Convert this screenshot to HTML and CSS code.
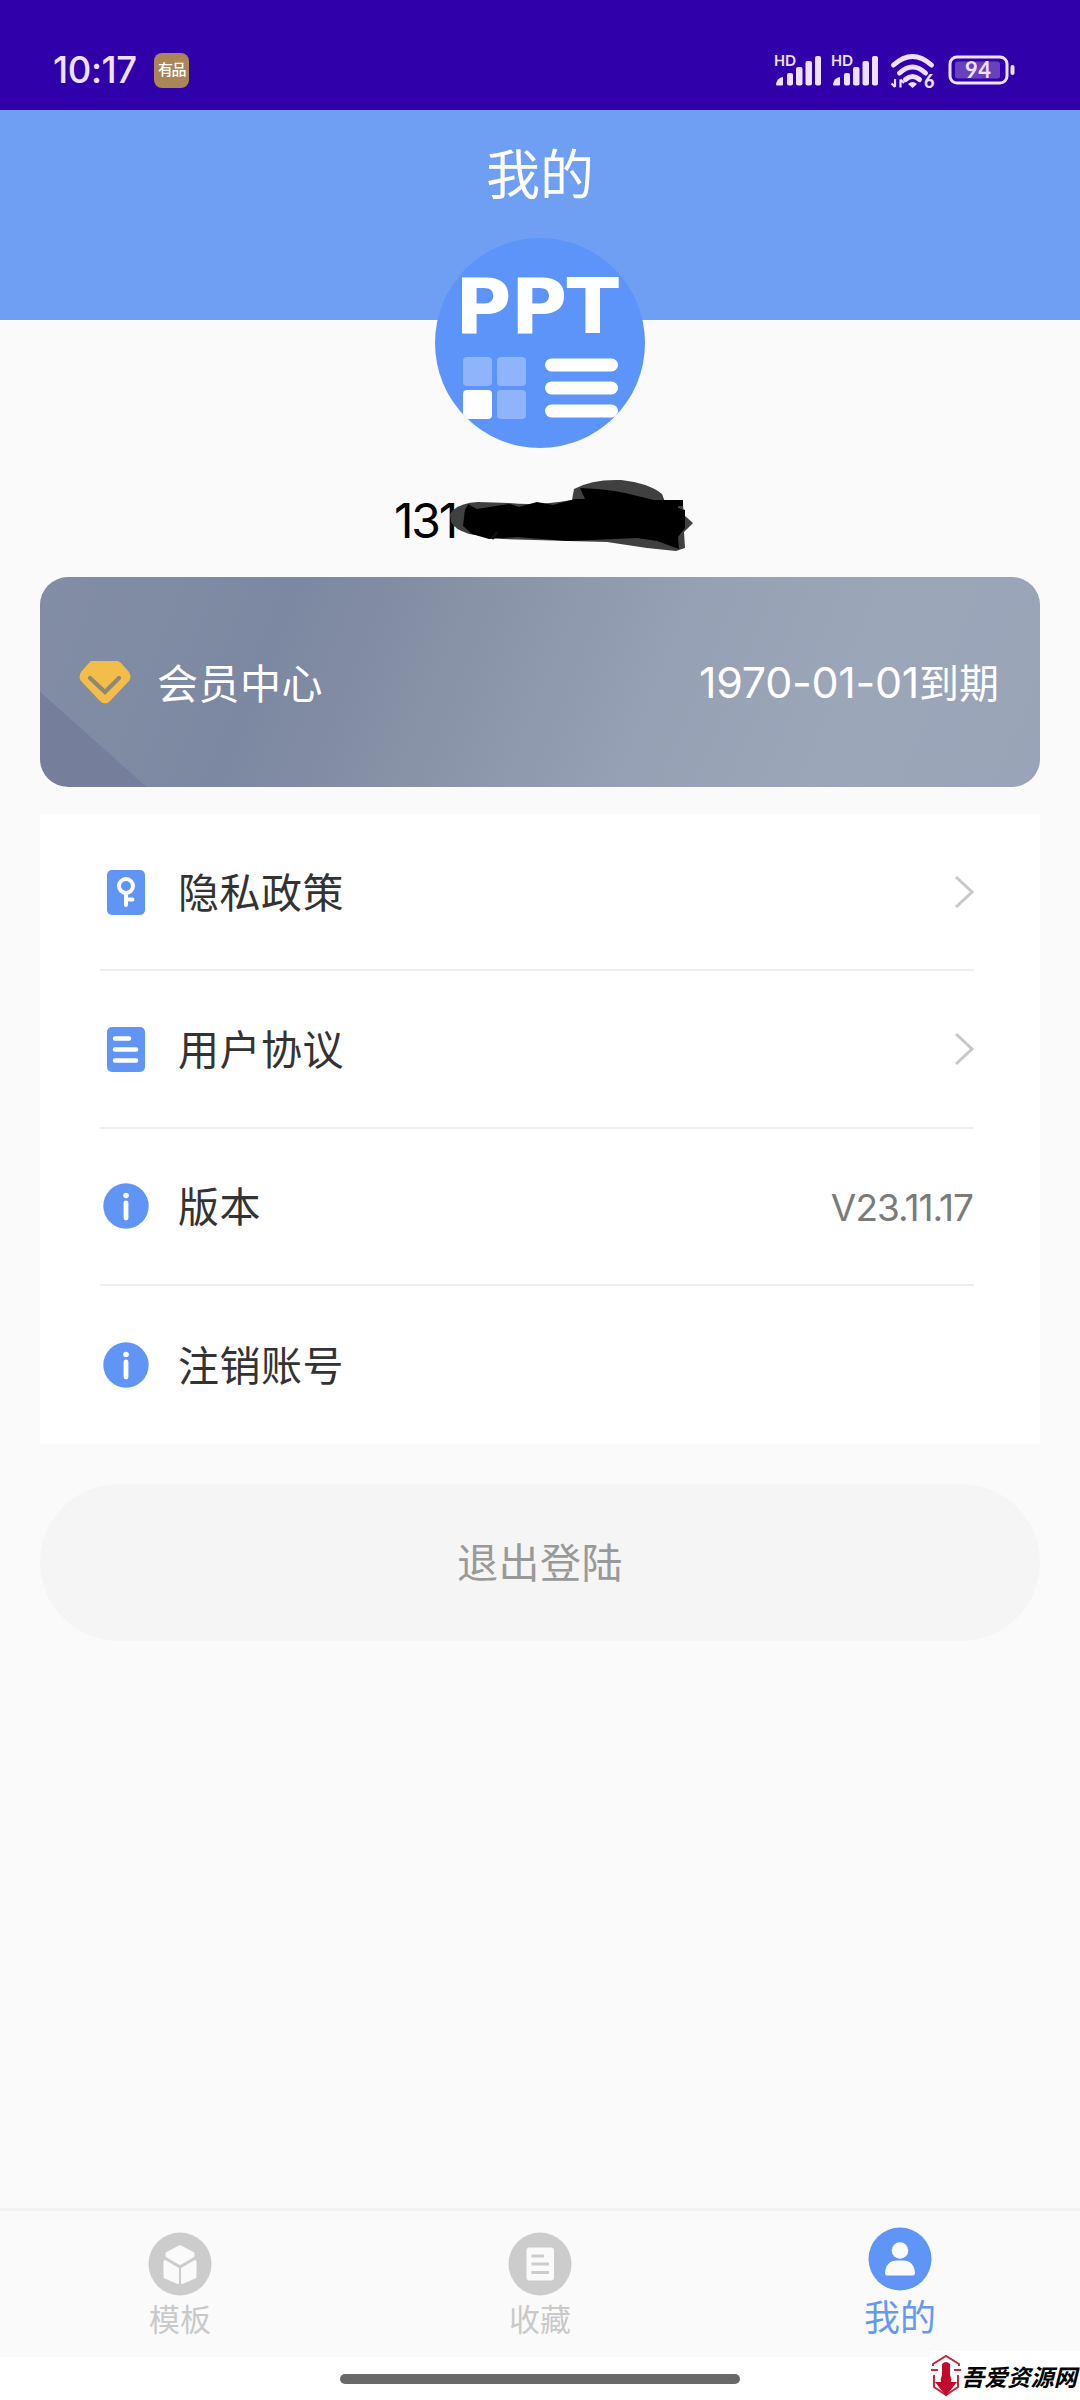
FILE: index.html
```html
<!DOCTYPE html>
<html lang="zh-CN">
<head>
<meta charset="utf-8">
<title>我的</title>
<link rel="stylesheet" href="styles.css">
</head>
<body>
<div class="screen">
  <header class="status">
    <span class="clock">10:17</span>
    <span class="app-badge">有品</span>
    <svg class="status-icons" width="246" height="44" viewBox="0 0 246 44" fill="#f0e0ff">
      <g id="signal">
        <text class="hd" x="0" y="18" textLength="22" lengthAdjust="spacingAndGlyphs">HD</text>
        <path d="M2 36q1-6 7-7v7q0 1.500-1 1.500H3q-1 0-1-1.500z"/>
        <rect x="13" y="25" width="6" height="12.500" rx="2"/>
        <rect x="22" y="19" width="6.500" height="18.500" rx="2"/>
        <rect x="31.500" y="13" width="6.500" height="24.500" rx="2"/>
        <rect x="41" y="8" width="6" height="29.500" rx="2"/>
      </g>
      <use href="#signal" x="57"/>
      <g fill="none" stroke="#f0e0ff" stroke-width="5" stroke-linecap="round">
        <path d="M119.500 17q19-17 38 0"/>
        <path d="M125.500 25q13-12 26 0"/>
        <path d="M131.500 31.500q7-6 14 0"/>
      </g>
      <path d="M134 36q4.500-4 9 0l-4.500 4z"/>
      <path d="M121 31v8m0 0l-3.500-3.500M126.500 39.500v-8m0 0l3.500 3.500" stroke="#f0e0ff" stroke-width="2.200" fill="none"/>
      <text class="six" x="150" y="40">6</text>
      <rect x="176" y="9" width="57" height="26" rx="7" fill="none" stroke="#f0e0ff" stroke-width="3"/>
      <rect x="181" y="13.500" width="45" height="17" rx="2.500" fill="#6940bd"/>
      <rect x="236.500" y="17" width="4" height="10" rx="2"/>
      <text class="battery" x="191" y="30" textLength="26">94</text>
    </svg>
  </header>

  <section class="hero">
    <h1 class="title">我的</h1>
    <svg class="avatar" viewBox="0 0 210 210">
      <defs><clipPath id="round"><circle cx="105" cy="105" r="105"/></clipPath></defs>
      <g clip-path="url(#round)" fill="#fff">
        <rect width="210" height="210" fill="#5c94f9"/>
        <text class="ppt" x="20" y="95" textLength="164">PPT</text>
        <rect x="28" y="119" width="29" height="29" rx="4" fill="#8fb4fb"/>
        <rect x="62" y="119" width="29" height="29" rx="4" fill="#8fb4fb"/>
        <rect x="28" y="152" width="29" height="29" rx="4"/>
        <rect x="62" y="152" width="29" height="29" rx="4" fill="#8fb4fb"/>
        <rect x="110" y="120.500" width="73" height="13" rx="6.500"/>
        <rect x="110" y="143.500" width="73" height="13" rx="6.500"/>
        <rect x="110" y="166.500" width="73" height="13" rx="6.500"/>
      </g>
    </svg>
  </section>

  <div class="account">
    <span class="phone">131</span>
    <svg class="scribble" width="246" height="76" viewBox="0 0 246 76">
      <path fill="#404040" d="M3 35Q10 24 31 23L62 24Q90 27 125 21L127 10Q145 0 174 1Q202 4 215 15L218 23L236 26L237 36L246 44L237 53L238 69L229 72L200 69L160 63L121 62L55 60L22 55Q7 50 4 43Z"/>
      <path fill="#000" d="M133 9Q160 10 178 14L207 21H236V27H231V29L238 31V49L231 58L232 70L210 62L190 59L121 62L70 58L42 60L25 55L16 47L18 31L21 25L30 30L55 26L63 25L72 28L90 23L106 26L128 20H138Z"/>
      <path d="M50 53l-5 7" stroke="#111" stroke-width="3"/>
    </svg>
  </div>

  <section class="member">
    <svg class="gem" width="52" height="44" viewBox="0 0 52 44">
      <path d="M13 1H38Q40 1 42 3L50 12Q53 17 50 21L31 41Q26 46 21 41L2 21Q-1 17 2 12L10 3Q11 1 13 1Z" fill="#f3bd49"/>
      <path d="M11 18L26 32L40 18" fill="none" stroke="#8d8873" stroke-width="4.200" stroke-linecap="round"/>
    </svg>
    <span class="member-name">会员中心</span>
    <span class="expiry"><span class="date">1970-01-01</span>到期</span>
  </section>

  <ul class="menu">
    <li class="row">
      <svg class="row-icon" viewBox="0 0 46 46"><rect x="4" y="1" width="38" height="45" rx="5" fill="#6195f5"/><g fill="none" stroke="#fff" stroke-linecap="round"><circle cx="23" cy="17" r="7" stroke-width="4"/><path d="M23 25V36M24 30.500H29.500" stroke-width="4"/></g></svg>
      <span class="label">隐私政策</span>
      <svg class="chevron" viewBox="0 0 20 34"><path d="M2 2L18 17L2 32" fill="none" stroke="#c8c8c8" stroke-width="3"/></svg>
    </li>
    <li class="row">
      <svg class="row-icon" viewBox="0 0 46 46"><rect x="4" y="1" width="38" height="45" rx="5" fill="#6195f5"/><path d="M12 12.500H26M12 23.500H33M12 34.500H33" stroke="#fff" stroke-width="4.500" stroke-linecap="round"/></svg>
      <span class="label">用户协议</span>
      <svg class="chevron" viewBox="0 0 20 34"><path d="M2 2L18 17L2 32" fill="none" stroke="#c8c8c8" stroke-width="3"/></svg>
    </li>
    <li class="row">
      <svg class="row-icon" viewBox="0 0 46 46"><circle cx="23" cy="23" r="22.700" fill="#6195f5"/><circle cx="23" cy="12.500" r="2.800" fill="#fff"/><path d="M23 20V35" stroke="#fff" stroke-width="4.800" stroke-linecap="round"/></svg>
      <span class="label">版本</span>
      <span class="version">V23.11.17</span>
    </li>
    <li class="row">
      <svg class="row-icon" viewBox="0 0 46 46"><circle cx="23" cy="23" r="22.700" fill="#6195f5"/><circle cx="23" cy="12.500" r="2.800" fill="#fff"/><path d="M23 20V35" stroke="#fff" stroke-width="4.800" stroke-linecap="round"/></svg>
      <span class="label">注销账号</span>
    </li>
  </ul>

  <button class="logout">退出登陆</button>

  <nav class="tabs">
    <a class="tab">
      <svg class="tab-icon" viewBox="0 0 64 64"><circle cx="32" cy="32" r="31.500" fill="#ccc"/><g fill="#fafafa" stroke="#fafafa" stroke-width="3" stroke-linejoin="round"><path d="M32 14.500L45 21.500V24L32 31.500L19 24V21.500Z"/><path d="M17 29.500L29.500 37V50.500L17 45Z"/><path d="M47 29.500L34.500 37V50.500L47 45Z"/></g></svg>
      <span>模板</span>
    </a>
    <a class="tab">
      <svg class="tab-icon" viewBox="0 0 64 64"><circle cx="32" cy="32" r="31.500" fill="#ccc"/><rect x="18.500" y="15.500" width="27.500" height="33" rx="3" fill="#fafafa"/><path d="M23.500 24H36M23.500 32H41M23.500 40.500H41" stroke="#ccc" stroke-width="3.200"/></svg>
      <span>收藏</span>
    </a>
    <a class="tab active">
      <svg class="tab-icon" viewBox="0 0 64 64"><circle cx="32" cy="32" r="31.500" fill="#5f95f6"/><circle cx="32" cy="23.500" r="8.300" fill="#fafafa"/><path d="M17 46Q18 33.500 29 33.500H35Q46 33.500 47 46Q47 48.500 45 48.500H19Q17 48.500 17 46Z" fill="#fafafa"/></svg>
      <span>我的</span>
    </a>
  </nav>

  <footer class="gesture">
    <div class="home-bar"></div>
    <div class="watermark">
      <svg width="30" height="44" viewBox="0 0 30 44">
        <path d="M2 12V10L15 2L28 10V12M0 16H7M23 16H30M3 21V33L15 41L27 33V21" fill="none" stroke="#c5283f" stroke-width="2"/>
        <path d="M11 10Q15 6 19 10V21Q21 25 20 28H26L15 42L4 28H10Q9 25 11 21Z" fill="#c4092c"/>
      </svg>
      <span>吾爱资源网</span>
    </div>
  </footer>
</div>
</body>
</html>
```
FILE: styles.css
```css
* { box-sizing: border-box; }
body {
  margin: 0;
  font-family: Lato, "Noto Sans CJK SC", sans-serif;
  background: #fafafa;
}
.screen {
  width: 1080px;
  height: 2400px;
  display: flex;
  flex-direction: column;
  overflow: hidden;
}
.status {
  height: 110px;
  flex: none;
  padding: 30px 60px 0 53px;
  display: flex;
  align-items: center;
  background: #3000aa;
  color: #f0e0ff;
}
.clock {
  width: 101px;
  font-family: Inter, sans-serif;
  font-size: 36.500px;
  font-weight: 500;
  line-height: 44px;
  letter-spacing: -0.400px;
}
.app-badge {
  width: 35px;
  height: 35px;
  border-radius: 8px;
  background: #aa8558;
  color: #fff;
  font-size: 15px;
  font-weight: 500;
  line-height: 33px;
  text-align: center;
  letter-spacing: -1.500px;
}
.status-icons { margin-left: auto; overflow: visible; }
.hd { font-size: 15px; font-weight: 700; }
.six { font-size: 18px; font-weight: 900; }
.battery { font-size: 22px; font-weight: 700; }
.hero {
  height: 210px;
  flex: none;
  display: flex;
  flex-direction: column;
  align-items: center;
  background: #6e9ff3;
}
.title {
  margin: 25px 0 0;
  height: 80px;
  color: #fff;
  font-size: 54px;
  font-weight: 400;
  line-height: 80px;
}
.avatar {
  width: 210px;
  height: 210px;
  flex: none;
  margin-top: 23px;
}
.ppt { font-family: "DejaVu Sans", sans-serif; font-size: 77px; font-weight: 700; }
.account {
  height: 129px;
  flex: none;
  margin: 128px 0 0 394px;
  display: flex;
  align-items: flex-start;
}
.phone {
  width: 53px;
  margin-top: 43px;
  font-family: Inter, sans-serif;
  font-size: 48px;
  line-height: 60px;
  letter-spacing: -2.200px;
  color: #000;
}
.scribble { margin-top: 31px; flex: none; }
.member {
  height: 210px;
  flex: none;
  margin: 0 40px;
  padding: 0 41px 0 39px;
  border-radius: 28px;
  display: flex;
  align-items: center;
  color: #fff;
  font-size: 41px;
  background:
    linear-gradient(to top right, #757f9c 50%, transparent 50.500%) left bottom / 106px 95px no-repeat,
    linear-gradient(112deg, #838ea6 0%, #7c87a1 24%, #8994a8 43%, #96a1b5 62%, #9ca6b9 80%, #99a4b8 100%);
}
.member-name { margin-left: 26px; padding-bottom: 3px; letter-spacing: 0.500px; }
.expiry { margin-left: auto; padding-bottom: 2px; font-size: 40px; }
.date { font-family: Inter, sans-serif; font-size: 43px; letter-spacing: -0.300px; }
.menu {
  height: 630px;
  flex: none;
  margin: 27px 40px 0;
  padding: 0 66px 0 60px;
  list-style: none;
  background: #fff;
}
.row {
  height: 157.300px;
  padding-left: 3px;
  display: flex;
  align-items: center;
  border-bottom: 2px solid #eee;
  color: #333;
  font-size: 41px;
}
.row:last-child { border-bottom: 0; }
.row-icon { width: 46px; height: 46px; margin-right: 29px; }
.label { padding-bottom: 4px; letter-spacing: 0.500px; }
.chevron { width: 20px; height: 34px; margin-left: auto; }
.version {
  margin-left: auto;
  margin-right: 1px;
  padding-top: 2px;
  color: #7b7b7b;
  font-family: Inter, sans-serif;
  font-size: 37px;
  letter-spacing: -1px;
}
.logout {
  height: 157px;
  flex: none;
  margin: 40px 40px 0;
  padding: 0 0 6px;
  border: 0;
  border-radius: 79px;
  background: #f5f5f5;
  color: #999;
  font: 41px "Noto Sans CJK SC", sans-serif;
  letter-spacing: 0.500px;
}
.tabs {
  height: 149px;
  flex: none;
  margin-top: auto;
  padding: 0;
  border-top: 3px solid #f3f3f3;
  display: grid;
  grid-template-columns: repeat(3, 1fr);
}
.tab {
  padding-top: 21px;
  display: flex;
  flex-direction: column;
  align-items: center;
  color: #c9c9c9;
  font-size: 31px;
  line-height: 46px;
}
.tab-icon { width: 64px; height: 64px; }
.active {
  padding-top: 16px;
  color: #6699ef;
  font-size: 36px;
  line-height: 52px;
}
.gesture {
  position: relative;
  height: 43px;
  flex: none;
  background: #fff;
  display: flex;
  justify-content: center;
  align-items: flex-start;
}
.home-bar {
  width: 400px;
  height: 10px;
  margin-top: 17px;
  border-radius: 5px;
  background: #696969;
}
.watermark {
  position: absolute;
  right: 0;
  bottom: 0;
  width: 149px;
  height: 49px;
  display: flex;
  align-items: center;
  background: #fff;
  color: #000;
  font-family: "Noto Sans CJK SC", sans-serif;
  font-size: 23.200px;
  font-weight: 700;
  font-style: italic;
  white-space: nowrap;
}
```
